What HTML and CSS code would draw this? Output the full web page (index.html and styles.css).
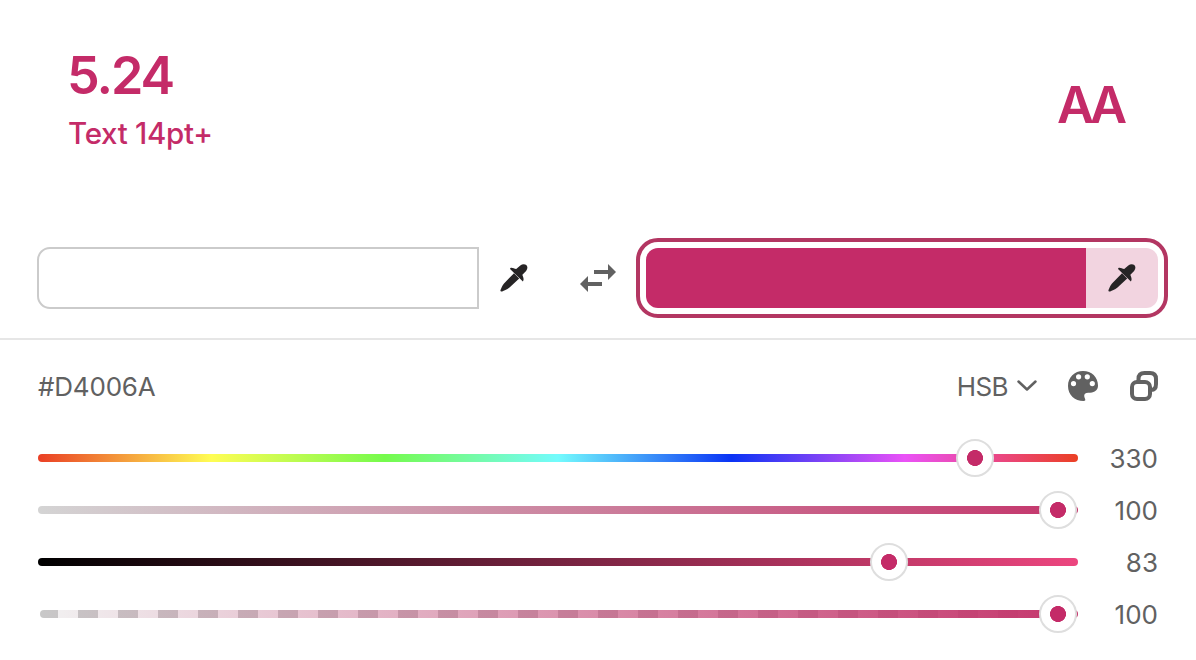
FILE: index.html
```html
<!DOCTYPE html>
<html lang="en">
<head>
<meta charset="utf-8">
<title>Contrast</title>
<link rel="stylesheet" href="styles.css">
</head>
<body>
<svg class="defs" width="0" height="0">
  <symbol id="dropper" viewBox="0 0 28 28">
    <path d="M14 9.300 19.200 14.500 9.500 23.600C6.800 25.900 3.900 26.600 2.200 27.400Q.3 28 .4 26.300C1.400 24 2 21.500 4 19.400Z"/>
    <path d="M11.400 3.700C12.800 3.700 14.600 4.600 16.200 5L20.300 1.500C22.200.100 24.600-.100 26.300 1.100C28 2.700 27.500 5.200 26.100 6.900L22.400 10.800C22.700 12.500 24.600 15 22.900 17.400L10.300 5.300C9.800 4.400 10.400 3.700 11.400 3.700Z"/>
  </symbol>
</svg>
<header class="result">
  <div>
    <div class="ratio">5.24</div>
    <div class="usage">Text 14pt+</div>
  </div>
  <div class="grade">AA</div>
</header>
<section class="wells">
  <div class="well well-light">
    <div class="swatch"></div>
    <div class="pick"><svg width="28" height="28"><use href="#dropper"/></svg></div>
  </div>
  <svg class="swap" width="36" height="28" viewBox="0 0 36 28"><path d="M14 6H28V0L36 8 28 16V10H14ZM22 18H8V12L0 20 8 28V22H22Z"/></svg>
  <div class="well well-active">
    <div class="swatch"></div>
    <div class="pick"><svg width="28" height="28"><use href="#dropper"/></svg></div>
  </div>
</section>
<section class="toolbar">
  <span class="hex">#D4006A</span>
  <span class="mode">HSB</span>
  <svg class="chevron" width="20" height="12" viewBox="0 0 20 12"><path d="M1.500 1.500 10 9.500 18.500 1.500"/></svg>
  <svg class="palette" width="30" height="30" viewBox="0 0 30 30"><path fill-rule="evenodd" d="M15 0C6.500 0 0 6.300 0 15C0 24 7 30 15.500 30C17.300 30 17.600 29 17.100 28C16.100 25.500 15.800 24.300 17 22.800C18.500 21 21.500 21.800 24 21.400C28 20.800 30 18 30 14.500C30 6 23.500 0 15 0ZM5.500 10a2.600 2.600 0 1 0 0 5.200a2.600 2.600 0 1 0 0-5.200ZM10.600 3.200a2.600 2.600 0 1 0 0 5.200a2.600 2.600 0 1 0 0-5.200ZM19.300 3.200a2.600 2.600 0 1 0 0 5.200a2.600 2.600 0 1 0 0-5.200ZM24.300 10a2.600 2.600 0 1 0 0 5.200a2.600 2.600 0 1 0 0-5.200Z"/></svg>
  <svg class="copy" width="28" height="30" viewBox="0 0 28 30"><rect x="2" y="11" width="18" height="17" rx="5"/><path d="M8.500 10V8Q8.500 2 14.500 2H20Q26 2 26 8V13Q26 19 21 19"/></svg>
</section>
<section class="sliders">
  <div class="row"><div class="track hue"><i class="thumb" style="left:937px"></i></div><span>330</span></div>
  <div class="row"><div class="track saturation"><i class="thumb" style="left:1020px"></i></div><span>100</span></div>
  <div class="row"><div class="track brightness"><i class="thumb" style="left:851px"></i></div><span>83</span></div>
  <div class="row"><div class="track alpha"><i class="thumb" style="left:1018px"></i></div><span>100</span></div>
</section>
</body>
</html>
```
FILE: styles.css
```css
* { box-sizing: border-box; }
body { margin: 0; width: 1196px; height: 660px; overflow: hidden; background: #fff; color: #616161; font-family: Inter, sans-serif; }
svg { display: block; }
.defs { position: absolute; }
.result { display: flex; justify-content: space-between; height: 238px; padding: 46px 70px 0 67px; color: #c42b68; }
.ratio { font-size: 52px; font-weight: 600; line-height: 60px; letter-spacing: -2px; }
.usage { font-size: 29.5px; font-weight: 500; line-height: 36px; margin: 9px 0 0 1px; letter-spacing: -0.3px; }
.grade { font-size: 51px; font-weight: 600; line-height: 60px; padding-top: 29px; letter-spacing: -5px; margin-right: 4px; }
.wells { display: flex; align-items: center; height: 102px; padding: 0 28px 20px 37px; border-bottom: 2px solid #e6e6e6; }
.well { display: flex; }
.well-light .swatch { width: 442px; height: 62px; border: 2px solid #cbcbcb; border-radius: 13px 0 0 13px; }
.pick { display: flex; width: 72px; align-items: center; justify-content: center; fill: #262425; }
.well-light .pick { width: 69px; }
.swap { margin: 0 20px 0 32px; fill: #616161; }
.well-active { width: 532px; height: 80px; padding: 6px; border: 4px solid #b33662; border-radius: 22px; }
.well-active .swatch { width: 440px; height: 60px; background: #c42b68; border-radius: 12px 0 0 12px; }
.well-active .pick { height: 60px; background: #f2d4e0; border-radius: 0 12px 12px 0; }
.toolbar { display: flex; align-items: center; height: 92px; padding: 0 38px; font-size: 26px; }
.hex { flex: 1; letter-spacing: -0.2px; }
.mode { margin-right: 9px; letter-spacing: -0.6px; }
.chevron { fill: none; stroke: #616161; stroke-width: 2.500; stroke-linecap: round; stroke-linejoin: round; }
.palette { margin: 0 32px 0 31px; fill: #616161; }
.copy { fill: none; stroke: #616161; stroke-width: 4; }
.row { display: flex; align-items: center; justify-content: space-between; height: 52px; padding: 0 38px; font-size: 26px; }
.track { position: relative; width: 1040px; height: 8px; border-radius: 4px; }
.hue { background: linear-gradient(90deg, #ea3f25, #fffd54 16.670%, #75fb4c 33.330%, #73fbfd 50%, #0a33f5 66.670%, #ea52f7 83.330%, #ea4788 92%, #eb4024); }
.saturation { background: linear-gradient(90deg, #d4d4d4, #c4356b); }
.brightness { background: linear-gradient(90deg, #000, #ec467f); }
.alpha { width: 1038px; margin-left: 2px; background: linear-gradient(90deg, rgb(196 53 107 / 0), #c4356b), repeating-linear-gradient(90deg, #c8c8c8 0 20px, #f2f2f2 20px 40px); background-position: 0 0, -2px 0; }
.thumb { position: absolute; top: 4px; width: 38px; height: 38px; margin: -19px; border: 2px solid #dedede; border-radius: 50%; background: radial-gradient(circle, #c42b68 7.700px, #fff 8.300px); }
```
